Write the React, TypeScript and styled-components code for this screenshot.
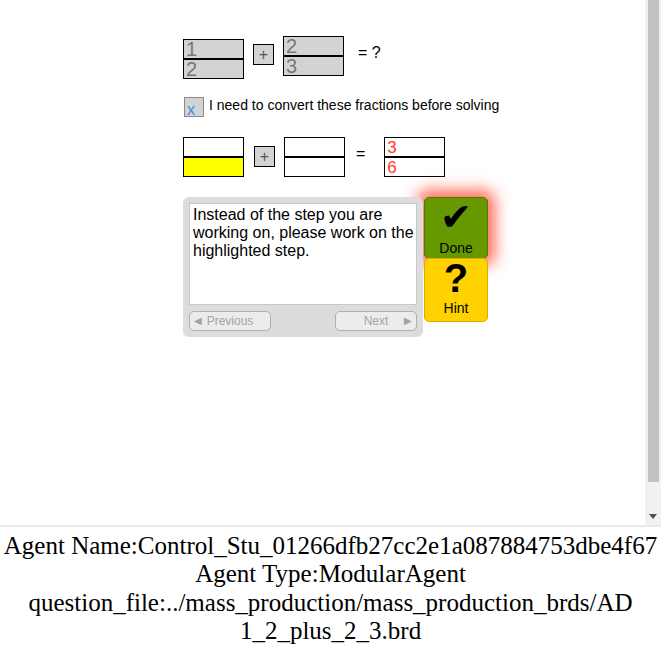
import styled, { createGlobalStyle } from 'styled-components'

const GlobalStyle = createGlobalStyle`
  html, body {
    margin: 0;
    padding: 0;
    background: #fff;
  }
`

const Frame = styled.div`
  display: flex;
  height: 525px;
  border-bottom: 2px solid #e9e9e9;
  font-family: 'Liberation Sans', Arial, sans-serif;
  color: #000;
`

const Tutor = styled.div`
  flex: 1;
  display: flex;
  flex-direction: column;
  padding: 36px 0 0 183px;
`

const Scrollbar = styled.div`
  width: 16px;
  display: flex;
  flex-direction: column;
  align-items: center;
  background: #f1f1f1;
`

const Thumb = styled.div`
  width: 11px;
  height: 482px;
  background: #c1c1c1;
`

const ArrowDown = styled.div`
  margin-top: 32px;
  width: 0;
  height: 0;
  border-left: 4px solid transparent;
  border-right: 4px solid transparent;
  border-top: 5px solid #505050;
`

const Row = styled.div<{ $top: number; $height?: number }>`
  display: flex;
  align-items: flex-start;
  margin-top: ${(p) => p.$top}px;
  ${(p) => (p.$height ? `height: ${p.$height}px;` : '')}
`

const Fraction = styled.div<{ $top?: number; $left?: number }>`
  display: flex;
  flex-direction: column;
  width: 59px;
  border: 1px solid #000;
  margin-top: ${(p) => p.$top ?? 0}px;
  margin-left: ${(p) => p.$left ?? 0}px;
`

const Cell = styled.div<{ $bg: string; $color?: string; $size?: number }>`
  height: 18px;
  background: ${(p) => p.$bg};
  color: ${(p) => p.$color ?? '#777'};
  font-size: ${(p) => p.$size ?? 20}px;
  line-height: 19px;
  padding-left: 2px;
  overflow: visible;

  & + & {
    border-top: 2px solid #000;
  }
`

const OpButton = styled.div<{ $top: number; $left: number }>`
  width: 19px;
  height: 19px;
  margin-top: ${(p) => p.$top}px;
  margin-left: ${(p) => p.$left}px;
  border: 1px solid #000;
  background: #d3d3d3;
  color: #555;
  font-size: 16px;
  line-height: 19px;
  text-align: center;
`

const Equals = styled.div<{ $top: number; $left: number }>`
  margin-top: ${(p) => p.$top}px;
  margin-left: ${(p) => p.$left}px;
  font-size: 16px;
  line-height: 18px;
  color: #000;
`

const CheckBox = styled.div`
  width: 16px;
  height: 18px;
  margin-left: 1px;
  border: 1px solid #8a8a8a;
  background: #d3d3d3;
  color: #3a8ee6;
  font-size: 16px;
  line-height: 24px;
  padding-left: 2px;
`

const CheckLabel = styled.div`
  margin-left: 5px;
  font-size: 14px;
  line-height: 16px;
`

const Panel = styled.div`
  position: relative;
  z-index: 1;
  width: 228px;
  height: 128px;
  padding: 6px;
  border-radius: 6px;
  background: #dcdcdc;
  display: flex;
  flex-direction: column;
`

const Message = styled.div`
  height: 98px;
  background: #fff;
  border: 1px solid #c8c8c8;
  padding: 2px 0 2px 3px;
  font-size: 16px;
  line-height: 18px;
  color: #000;
`

const NavRow = styled.div`
  display: flex;
  justify-content: space-between;
  margin-top: 6px;
`

const NavButton = styled.div<{ $reverse?: boolean }>`
  width: 76px;
  height: 18px;
  border: 1px solid #b0b0b0;
  border-radius: 5px;
  background: #ececec;
  color: #a3a3a3;
  font-size: 12px;
  line-height: 18px;
  display: flex;
  flex-direction: ${(p) => (p.$reverse ? 'row-reverse' : 'row')};
  align-items: center;
  padding: 0 2px;
`

const NavArrow = styled.span`
  font-size: 10px;
  color: #a3a3a3;
  width: 12px;
  text-align: center;
`

const NavText = styled.span`
  flex: 1;
  text-align: center;
`

const SideButtons = styled.div`
  display: flex;
  flex-direction: column;
  margin-left: 1px;
`

const DoneButton = styled.div`
  width: 62px;
  height: 60px;
  border: 1px solid #4f7a00;
  border-radius: 5px;
  background: #669900;
  box-shadow: 0 0 15px 7px rgba(255, 70, 45, 0.8);
  display: flex;
  flex-direction: column;
  align-items: center;
`

const HintButton = styled.div`
  position: relative;
  z-index: 1;
  width: 62px;
  height: 62px;
  margin-top: -1px;
  border: 1px solid #e0a800;
  border-radius: 5px;
  background: #ffd200;
  display: flex;
  flex-direction: column;
  align-items: center;
`

const Glyph = styled.div<{ $size: number; $bold?: boolean }>`
  font-family: ${(p) => (p.$bold ? "'Liberation Sans', Arial" : "'DejaVu Sans'")}, sans-serif;
  font-size: ${(p) => p.$size}px;
  font-weight: ${(p) => (p.$bold ? 700 : 400)};
  height: 34px;
  line-height: 34px;
  margin-top: 2px;
  color: #000;
`

const ButtonLabel = styled.div<{ $gap: number }>`
  font-size: 14px;
  line-height: 16px;
  margin-top: ${(p) => p.$gap}px;
  color: #000;
`

const Info = styled.div`
  padding-top: 5px;
  text-align: center;
  font-family: 'Liberation Serif', 'Times New Roman', serif;
  font-size: 25px;
  line-height: 28.3px;
  color: #000;
`

export default function App() {
  return (
    <>
      <GlobalStyle />
      <Frame>
        <Tutor>
          <Row $top={0} $height={44}>
            <Fraction $top={3}>
              <Cell $bg="#d3d3d3">1</Cell>
              <Cell $bg="#d3d3d3">2</Cell>
            </Fraction>
            <OpButton $top={8} $left={9}>+</OpButton>
            <Fraction $left={9}>
              <Cell $bg="#d3d3d3">2</Cell>
              <Cell $bg="#d3d3d3">3</Cell>
            </Fraction>
            <Equals $top={8} $left={14}>= ?</Equals>
          </Row>

          <Row $top={17} $height={20}>
            <CheckBox>x</CheckBox>
            <CheckLabel>I need to convert these fractions before solving</CheckLabel>
          </Row>

          <Row $top={20} $height={41}>
            <Fraction>
              <Cell $bg="#fff" />
              <Cell $bg="#ffff00" />
            </Fraction>
            <OpButton $top={9} $left={10}>+</OpButton>
            <Fraction $left={9}>
              <Cell $bg="#fff" />
              <Cell $bg="#fff" />
            </Fraction>
            <Equals $top={8} $left={11}>=</Equals>
            <Fraction $left={19}>
              <Cell $bg="#fff" $color="#ff3a1f" $size={17}>3</Cell>
              <Cell $bg="#fff" $color="#ff3a1f" $size={17}>6</Cell>
            </Fraction>
          </Row>

          <Row $top={19}>
            <Panel>
              <Message>
                Instead of the step you are working on, please work on the highlighted step.
              </Message>
              <NavRow>
                <NavButton>
                  <NavArrow>◀</NavArrow>
                  <NavText>Previous</NavText>
                  <NavArrow />
                </NavButton>
                <NavButton $reverse>
                  <NavArrow>▶</NavArrow>
                  <NavText>Next</NavText>
                  <NavArrow />
                </NavButton>
              </NavRow>
            </Panel>
            <SideButtons>
              <DoneButton>
                <Glyph $size={38}>✔</Glyph>
                <ButtonLabel $gap={6}>Done</ButtonLabel>
              </DoneButton>
              <HintButton>
                <Glyph $size={40} $bold>?</Glyph>
                <ButtonLabel $gap={5}>Hint</ButtonLabel>
              </HintButton>
            </SideButtons>
          </Row>
        </Tutor>
        <Scrollbar>
          <Thumb />
          <ArrowDown />
        </Scrollbar>
      </Frame>
      <Info>
        Agent Name:Control_Stu_01266dfb27cc2e1a087884753dbe4f67
        <br />
        Agent Type:ModularAgent
        <br />
        question_file:../mass_production/mass_production_brds/AD
        <br />
        1_2_plus_2_3.brd
      </Info>
    </>
  )
}
